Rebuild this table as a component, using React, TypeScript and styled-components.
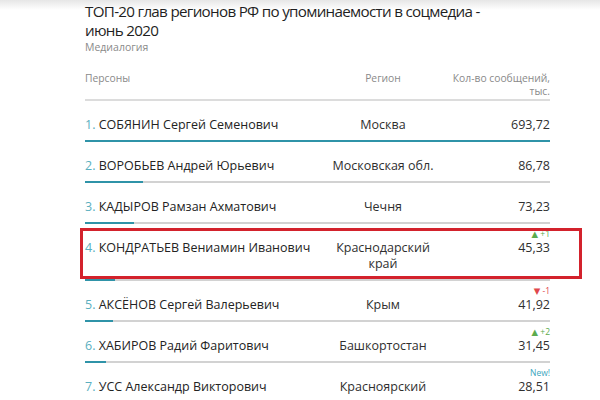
import React from "react";
import styled, { createGlobalStyle } from "styled-components";

const Global = createGlobalStyle`
  html, body { margin: 0; padding: 0; background: #fff; }
  body { font-family: "Open Sans", "DejaVu Sans", sans-serif; color: #2b2b2b; width: 600px; height: 400px; overflow: hidden; }
`;

const Shade = styled.div`
  position: absolute;
  left: 0; top: 0; right: 0; height: 10px;
  background: linear-gradient(#e6e6e6, rgba(255,255,255,0));
  pointer-events: none;
`;

const Page = styled.div`
  position: relative;
  width: 600px;
  height: 400px;
  padding: 2px 0 0 85px;
  box-sizing: border-box;
`;

const Content = styled.div`
  width: 465px;
  position: relative;
`;

const Title = styled.h1`
  margin: 0;
  font-family: "Open Sans", sans-serif;
  font-size: 15.2px;
  line-height: 19px;
  font-weight: 500;
  color: #1f1f1f;
  letter-spacing: -0.7px;
  width: 440px;
`;

const Source = styled.div`
  font-size: 10.5px;
  line-height: 14px;
  color: #8a8a8a;
`;

const Header = styled.div`
  display: grid;
  grid-template-columns: 238px 120px 107px;
  margin-top: 18px;
  padding-bottom: 2px;
  border-bottom: 2px solid #dcdcdc;
  font-size: 10.3px;
  line-height: 12.5px;
  color: #8a8a8a;
`;

const HeadCell = styled.div<{ $align: "left" | "center" | "right" }>`
  text-align: ${(p) => p.$align};
`;

const RowWrap = styled.div`
  display: flex;
  flex-direction: column;
`;

const RowGrid = styled.div`
  display: grid;
  grid-template-columns: 238px 120px 107px;
  padding: 16px 0 7px;
  font-size: 12.5px;
  line-height: 16px;
  align-items: start;
`;

const Name = styled.div`
  color: #232323;
  white-space: nowrap;
`;

const Num = styled.span`
  color: #5aafc0;
`;

const Region = styled.div`
  text-align: center;
  color: #2f2f2f;
`;

const Value = styled.div`
  position: relative;
  text-align: right;
  color: #2f2f2f;
`;

const Change = styled.span<{ $color: string }>`
  position: absolute;
  right: 0;
  top: -11px;
  font-size: 8.5px;
  line-height: 9px;
  color: ${(p) => p.$color};
  white-space: nowrap;
`;

const Track = styled.div`
  height: 2px;
  background: #d2d2d2;
  position: relative;
`;

const Fill = styled.div`
  height: 2px;
  background: #2f93a8;
`;

const Highlight = styled.div`
  position: absolute;
  left: -5px;
  top: 226px;
  width: 502px;
  height: 51px;
  border: 3px solid #d3222c;
  box-sizing: border-box;
  pointer-events: none;
`;

type Row = {
  n: number;
  surname: string;
  rest: string;
  region: React.ReactNode;
  value: number;
  change?: { text: string; color: string };
};

const rows: Row[] = [
  { n: 1, surname: "СОБЯНИН", rest: "Сергей Семенович", region: "Москва", value: 693.72 },
  { n: 2, surname: "ВОРОБЬЕВ", rest: "Андрей Юрьевич", region: "Московская обл.", value: 86.78 },
  { n: 3, surname: "КАДЫРОВ", rest: "Рамзан Ахматович", region: "Чечня", value: 73.23 },
  {
    n: 4,
    surname: "КОНДРАТЬЕВ",
    rest: "Вениамин Иванович",
    region: (
      <>
        Краснодарский
        <br />
        край
      </>
    ),
    value: 45.33,
    change: { text: "▲ +1", color: "#5cab4e" },
  },
  { n: 5, surname: "АКСЁНОВ", rest: "Сергей Валерьевич", region: "Крым", value: 41.92, change: { text: "▼ -1", color: "#e0474c" } },
  { n: 6, surname: "ХАБИРОВ", rest: "Радий Фаритович", region: "Башкортостан", value: 31.45, change: { text: "▲ +2", color: "#5cab4e" } },
  { n: 7, surname: "УСС", rest: "Александр Викторович", region: "Красноярский", value: 28.51, change: { text: "New!", color: "#3aa6bd" } },
];

const max = 693.72;
const fmt = (v: number) => v.toFixed(2).replace(".", ",");

export default function App() {
  return (
    <>
      <Global />
      <Page>
        <Shade />
        <Content>
          <Title>
            ТОП-20 глав регионов РФ по упоминаемости в соцмедиа -
            <br />
            июнь 2020
          </Title>
          <Source>Медиалогия</Source>
          <Header>
            <HeadCell $align="left">Персоны</HeadCell>
            <HeadCell $align="center">Регион</HeadCell>
            <HeadCell $align="right">
              Кол-во сообщений,
              <br />
              тыс.
            </HeadCell>
          </Header>
          {rows.map((r) => (
            <RowWrap key={r.n}>
              <RowGrid>
                <Name>
                  <Num>{r.n}.</Num> {r.surname} {r.rest}
                </Name>
                <Region>{r.region}</Region>
                <Value>
                  {r.change && <Change $color={r.change.color}>{r.change.text}</Change>}
                  {fmt(r.value)}
                </Value>
              </RowGrid>
              <Track>
                <Fill style={{ width: `${(r.value / max) * 100}%` }} />
              </Track>
            </RowWrap>
          ))}
          <Highlight />
        </Content>
      </Page>
    </>
  );
}
